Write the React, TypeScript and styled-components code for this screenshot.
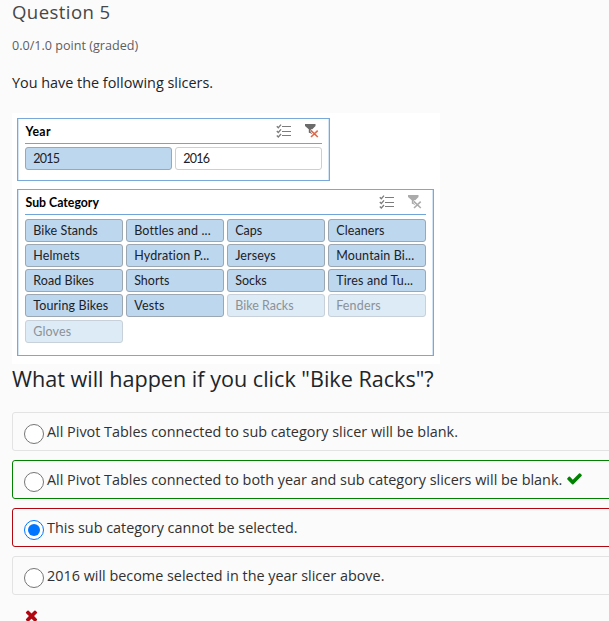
import React from "react";
import styled, { createGlobalStyle } from "styled-components";

const Global = createGlobalStyle`
  html, body { margin: 0; background: #fbfbfb; overflow: hidden; }
  * { box-sizing: border-box; }
`;

const Page = styled.main`
  width: 609px;
  height: 621px;
  padding-left: 12px;
  overflow: hidden;
  color: #313131;
  font-family: "Open Sans", sans-serif;
  white-space: nowrap;
`;

const Title = styled.h3`
  margin: 0;
  height: 37px;
  font-size: 18.6px;
  line-height: 23px;
  font-weight: 400;
  letter-spacing: 0.4px;
  color: #474747;
`;

const Progress = styled.div`
  height: 35px;
  font-size: 12.6px;
  line-height: 18px;
  color: #5e5e5e;
`;

const Prompt = styled.p`
  margin: 0;
  height: 41px;
  font-size: 14.4px;
  line-height: 22px;
  color: #212529;
`;

const Slicers = styled.div`
  width: 428px;
  height: 251px;
  padding: 5px;
  background: #fff;
  font-family: Lato, sans-serif;
  color: #1c2126;
`;

const Slicer = styled.section<{ $w: number; $h: number }>`
  width: ${(p) => p.$w}px;
  height: ${(p) => p.$h}px;
  margin-bottom: 8px;
  padding: 0 7px;
  border: 1px solid #78a9d8;
  box-shadow: inset 1px 0 #d3e4f5, inset -1px 0 #d3e4f5;
`;

const SlicerHead = styled.header`
  display: flex;
  align-items: center;
  height: 25px;
  border-bottom: 1px solid #6fa5d8;
  color: #000;
`;

const SlicerName = styled.span<{ $ls: number }>`
  flex: 1;
  padding: 1px 0 0 0.5px;
  font-size: 12.3px;
  font-weight: 700;
  line-height: 24px;
  letter-spacing: ${(p) => p.$ls}px;
`;

const HeadIcons = styled.div<{ $end: number }>`
  display: flex;
  gap: 12px;
  padding-right: ${(p) => p.$end}px;
  svg { display: block; }
`;

const Tiles = styled.div<{ $cols: number; $top: number }>`
  display: grid;
  grid-template-columns: repeat(${(p) => p.$cols}, 1fr);
  gap: 2.25px 3px;
  padding-top: ${(p) => p.$top}px;
`;

type TileKind = "on" | "off" | "empty";
const tileFill = { on: "#bdd7ee", off: "#ffffff", empty: "#ddebf7" };
const tileEdge = { on: "#9ba7b3", off: "#cfcfcf", empty: "#c8d1d9" };

const Tile = styled.div<{ $kind: TileKind; $ls: number }>`
  height: 23px;
  padding-left: 7.2px;
  border: 1px solid ${(p) => tileEdge[p.$kind]};
  border-radius: 3px;
  background: ${(p) => tileFill[p.$kind]};
  color: ${(p) => (p.$kind === "empty" ? "#8c9196" : "#1c2126")};
  font-size: 12.5px;
  line-height: 21.4px;
  letter-spacing: ${(p) => p.$ls}px;
`;

const Question = styled.h2`
  margin: 0;
  height: 48px;
  font-size: 21.6px;
  line-height: 30px;
  font-weight: 400;
  color: #212529;
`;

const Choices = styled.div`
  display: flex;
  flex-direction: column;
  gap: 9px;
`;

const Choice = styled.label<{ $edge: string }>`
  display: flex;
  align-items: center;
  width: 640px;
  height: 39px;
  padding-left: 11px;
  border: 1px solid ${(p) => p.$edge};
  border-radius: 3px;
  font-size: 14.4px;
  line-height: 37px;
  color: #313131;
`;

const Radio = styled.span<{ $checked: boolean }>`
  display: flex;
  align-items: center;
  justify-content: center;
  width: 20px;
  height: 20px;
  margin: 5px 3px 0 0;
  border: 1px solid ${(p) => (p.$checked ? "#0075ff" : "#767676")};
  border-radius: 50%;
  background: #fff;
  &::after {
    content: "";
    width: 12px;
    height: 12px;
    border-radius: 50%;
    background: ${(p) => (p.$checked ? "#0075ff" : "transparent")};
  }
`;

const ChoiceText = styled.span`
  margin-top: -1px;
`;

const CheckMark = styled.svg`
  margin: -2px 0 0 4px;
  fill: #008100;
`;

const Cross = styled.svg`
  display: block;
  margin: 12px 0 0 11px;
  fill: #b20610;
`;

const MultiSelect = ({ color }: { color: string }) => (
  <svg width="16" height="14" viewBox="0 0 16 14" fill="none" stroke={color}>
    <path d="M6 2.5h9M6 7.5h9M6 11.5h9" />
    <path d="M.8 2.2l1.5 1.5L5 .6M.8 7l1.5 1.5L5 5.3M.8 11.5l1.5 1.5L5 10" strokeWidth="1.3" />
  </svg>
);

const ClearFilter = ({ funnel, cross }: { funnel: string; cross: string }) => (
  <svg width="15" height="14" viewBox="0 0 15 14">
    <path d="M1 0h10.5v2L8 5.5V10L5 8.5v-3L1 2z" fill={funnel} />
    <path d="M6.5 6l7.5 7.3M14 6.3L6.8 13.3" stroke="#fff" strokeWidth="3" />
    <path d="M4.8 5.4h1.6v3.3h-1.6z" fill={funnel} />
    <path d="M6.8 6.3l7 6.7M13.7 6.6L7 13" stroke={cross} strokeWidth="1.6" />
  </svg>
);

const years: [string, TileKind, number][] = [
  ["2015", "on", -0.7],
  ["2016", "off", -0.7],
];

const categories: [string, TileKind, number][] = [
  ["Bike Stands", "on", 0.12],
  ["Bottles and ...", "on", 0.15],
  ["Caps", "on", 0],
  ["Cleaners", "on", 0.1],
  ["Helmets", "on", 0.15],
  ["Hydration P...", "on", 0.15],
  ["Jerseys", "on", 0.1],
  ["Mountain Bi...", "on", 0.15],
  ["Road Bikes", "on", 0.1],
  ["Shorts", "on", 0],
  ["Socks", "on", 0],
  ["Tires and Tu...", "on", 0.15],
  ["Touring Bikes", "on", 0.16],
  ["Vests", "on", 0.2],
  ["Bike Racks", "empty", 0],
  ["Fenders", "empty", 0.15],
  ["Gloves", "empty", 0.15],
];

const choices = [
  { text: "All Pivot Tables connected to sub category slicer will be blank.", edge: "#e3e3e3" },
  { text: "All Pivot Tables connected to both year and sub category slicers will be blank.", edge: "#008100", correct: true },
  { text: "This sub category cannot be selected.", edge: "#b20610", checked: true },
  { text: "2016 will become selected in the year slicer above.", edge: "#e3e3e3" },
];

export default function App() {
  return (
    <Page>
      <Global />
      <Title>Question 5</Title>
      <Progress>0.0/1.0 point (graded)</Progress>
      <Prompt>You have the following slicers.</Prompt>
      <Slicers>
        <Slicer $w={313} $h={63}>
          <SlicerHead>
            <SlicerName $ls={0.35}>Year</SlicerName>
            <HeadIcons $end={3}>
              <MultiSelect color="#7c7c7c" />
              <ClearFilter funnel="#6b6b6b" cross="#e0694a" />
            </HeadIcons>
          </SlicerHead>
          <Tiles $cols={2} $top={3}>
            {years.map(([name, kind, ls]) => <Tile key={name} $kind={kind} $ls={ls}>{name}</Tile>)}
          </Tiles>
        </Slicer>
        <Slicer $w={417} $h={167}>
          <SlicerHead>
            <SlicerName $ls={0}>Sub Category</SlicerName>
            <HeadIcons $end={4}>
              <MultiSelect color="#7c7c7c" />
              <ClearFilter funnel="#ababab" cross="#ababab" />
            </HeadIcons>
          </SlicerHead>
          <Tiles $cols={4} $top={3.6}>
            {categories.map(([name, kind, ls]) => <Tile key={name} $kind={kind} $ls={ls}>{name}</Tile>)}
          </Tiles>
        </Slicer>
      </Slicers>
      <Question>What will happen if you click "Bike Racks"?</Question>
      <Choices>
        {choices.map((c) => (
          <Choice key={c.text} $edge={c.edge}>
            <Radio $checked={!!c.checked} />
            <ChoiceText>{c.text}</ChoiceText>
            {c.correct && (
              <CheckMark width="17" height="17" viewBox="0 0 1792 1792">
                <path d="M1671 566q0 40-28 68l-724 724-136 136q-28 28-68 28t-68-28l-136-136-362-362q-28-28-28-68t28-68l136-136q28-28 68-28t68 28l294 295 656-657q28-28 68-28t68 28l136 136q28 28 28 68z" />
              </CheckMark>
            )}
          </Choice>
        ))}
      </Choices>
      <Cross width="17" height="17" viewBox="0 0 1792 1792">
        <path d="M1490 1322q0 40-28 68l-136 136q-28 28-68 28t-68-28l-294-294-294 294q-28 28-68 28t-68-28l-136-136q-28-28-28-68t28-68l294-294-294-294q-28-28-28-68t28-68l136-136q28-28 68-28t68 28l294 294 294-294q28-28 68-28t68 28l136 136q28 28 28 68t-28 68l-294 294 294 294q28 28 28 68z" />
      </Cross>
    </Page>
  );
}
